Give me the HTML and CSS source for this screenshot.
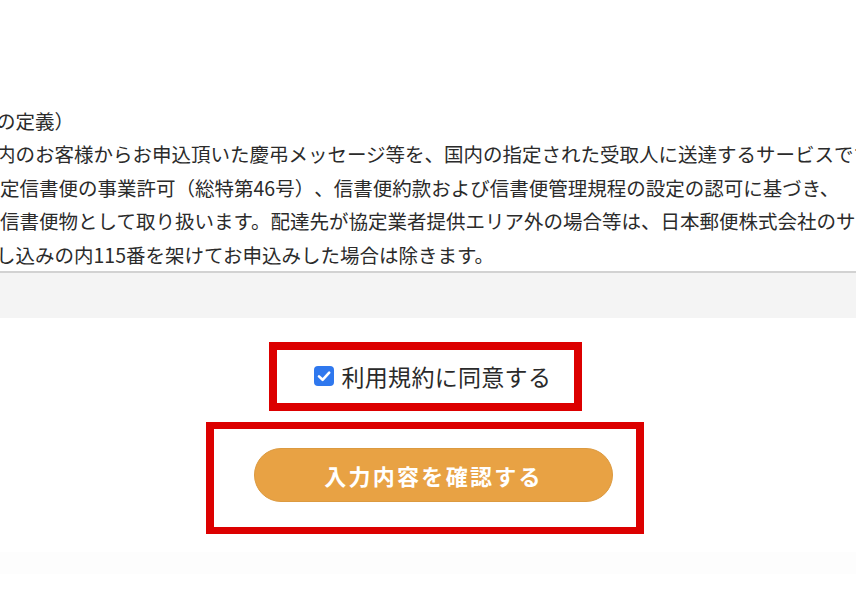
FILE: index.html
```html
<!DOCTYPE html>
<html lang="ja">
<head>
<meta charset="utf-8">
<title>利用規約</title>
<link rel="stylesheet" href="styles.css">
</head>
<body>
<main class="page">
  <section class="terms">
    <div class="line cut">の定義）</div>
    <div class="line cut">内のお客様からお申込頂いた慶弔メッセージ等を、国内の指定された受取人に送達するサービスです。</div>
    <div class="line">定信書便の事業許可（総特第46号）、信書便約款および信書便管理規程の設定の認可に基づき、</div>
    <div class="line">信書便物として取り扱います。配達先が協定業者提供エリア外の場合等は、日本郵便株式会社のサービスを</div>
    <div class="line cut">し込みの内115番を架けてお申込みした場合は除きます。</div>
  </section>
  <div class="band"></div>
  <div class="actions">
    <div class="frame agree-frame">
      <label class="agree">
        <span class="check">
          <svg viewBox="0 0 20 20" width="20" height="20" aria-hidden="true"><rect x="0" y="0" width="20" height="20" rx="4" fill="#2f78ee"/><path d="M5 10.4 L8.6 13.8 L15.2 6.6" fill="none" stroke="#fff" stroke-width="2.6" stroke-linecap="round" stroke-linejoin="round"/></svg>
        </span>
        <span class="agree-text">利用規約に同意する</span>
      </label>
    </div>
    <div class="frame submit-frame">
      <button class="submit" type="button">入力内容を確認する</button>
    </div>
  </div>
  <div class="fade"></div>
</main>
</body>
</html>
```
FILE: styles.css
```css
html, body {
  margin: 0;
  padding: 0;
  background: #ffffff;
}
body {
  font-family: "Noto Sans CJK JP", "Noto Sans", sans-serif;
  color: #333333;
  overflow: hidden;
  text-spacing-trim: space-all;
}
.page {
  width: 856px;
  height: 614px;
  overflow: hidden;
}
.terms {
  padding-top: 104px;
  font-size: 19.5px;
  line-height: 33.4px;
  color: #2b2b2b;
  white-space: nowrap;
  overflow: hidden;
}
.line {
  height: 33.4px;
}
.line.cut {
  margin-left: -4px;
}
.band {
  height: 45px;
  border-top: 2px solid #d2d2d2;
  background: #f4f4f4;
}
.actions {
  display: flex;
  flex-direction: column;
  align-items: center;
  gap: 11px;
  padding-top: 24px;
  padding-right: 6px;
}
.frame {
  box-sizing: border-box;
  border: 8px solid #dc0000;
  display: flex;
  align-items: center;
}
.agree-frame {
  width: 313px;
  height: 69px;
  padding-left: 37px;
}
.agree {
  display: flex;
  align-items: center;
  gap: 8px;
  font-size: 23px;
  color: #2a2a2a;
  cursor: pointer;
}
.check {
  display: flex;
  width: 20px;
  height: 20px;
}
.agree-text {
  letter-spacing: 0.3px;
}
.submit-frame {
  width: 438px;
  height: 112px;
  border-width: 7px 8px;
  padding-left: 40px;
  padding-bottom: 6px;
}
.submit {
  width: 359px;
  height: 54px;
  border: 1px solid #dc9a40;
  border-radius: 27px;
  background: #e8a244;
  color: #ffffff;
  font-family: "Noto Sans CJK JP", "Noto Sans", sans-serif;
  font-size: 22px;
  font-weight: 700;
  letter-spacing: 2.3px;
  padding: 0;
}
.fade {
  height: 22px;
  margin-top: 18px;
  background: #fdfdfd;
}
```
